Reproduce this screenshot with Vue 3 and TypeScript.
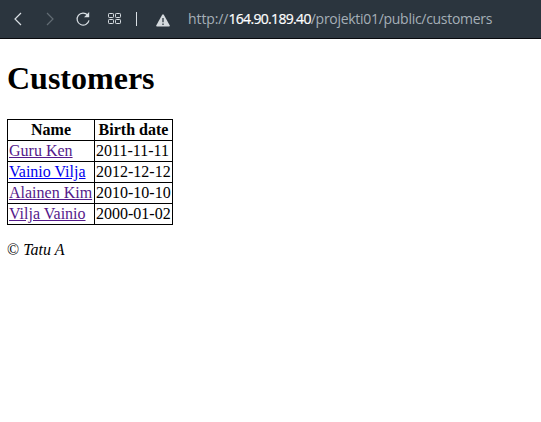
<script setup lang="ts">
interface Customer {
  name: string
  birthDate: string
  visited: boolean
}

const customers: Customer[] = [
  { name: 'Guru Ken', birthDate: '2011-11-11', visited: true },
  { name: 'Vainio Vilja', birthDate: '2012-12-12', visited: false },
  { name: 'Alainen Kim', birthDate: '2010-10-10', visited: true },
  { name: 'Vilja Vainio', birthDate: '2000-01-02', visited: true },
]
</script>

<template>
  <div class="window">
    <header class="toolbar">
      <svg class="icon back" width="16" height="16" viewBox="0 0 16 16"><path d="M11 2 5 8l6 6" /></svg>
      <svg class="icon forward" width="16" height="16" viewBox="0 0 16 16"><path d="M5 2l6 6-6 6" /></svg>
      <svg class="icon reload" width="16" height="16" viewBox="0 0 16 16">
        <path d="M12.7 4.2A6 6 0 1 0 14 9.3" />
        <path class="solid" d="M14.2 1v5.2H9z" />
      </svg>
      <svg class="icon tiles" width="14" height="12" viewBox="0 0 14 12">
        <rect x=".5" y=".5" width="5" height="4" rx=".8" />
        <rect x="7.5" y=".5" width="5" height="4" rx=".8" />
        <rect x=".5" y="6.5" width="5" height="4" rx=".8" />
        <rect x="7.5" y="6.5" width="5" height="4" rx=".8" />
      </svg>
      <span class="divider"></span>
      <svg class="warning" width="14" height="13" viewBox="0 0 14 13">
        <path d="M6.2.8Q7-.3 7.8.8L13.8 11.5Q14 12.5 13 12.5H1Q0 12.5.2 11.5z" fill="#d5dade" />
        <path d="M6.2 4h1.6v4.3H6.2zM6.2 9.4h1.6V11H6.2z" fill="#4b555d" />
      </svg>
      <div class="url"><span class="scheme">http://</span><span class="host">164.90.189.40</span><span class="path">/projekti01/public/customers</span></div>
    </header>
    <main>
      <h1>Customers</h1>
      <table>
        <thead>
          <tr><th class="name">Name</th><th class="date">Birth date</th></tr>
        </thead>
        <tbody>
          <tr v-for="customer in customers" :key="customer.name">
            <td><a href="#" :class="{ visited: customer.visited }">{{ customer.name }}</a></td>
            <td>{{ customer.birthDate }}</td>
          </tr>
        </tbody>
      </table>
      <footer>© <em>Tatu A</em></footer>
    </main>
  </div>
</template>

<style>
body {
  margin: 0;
  background: #fff;
}
</style>

<style scoped>
.window {
  height: 422px;
  overflow: hidden;
  background: #fff;
}
.toolbar {
  box-sizing: border-box;
  height: 39px;
  display: flex;
  align-items: center;
  padding-left: 10px;
  background: #2b353e;
  border-bottom: 1px solid #08090d;
}
.icon {
  fill: none;
  stroke: #d9dfe4;
  stroke-width: 1.2;
  flex: none;
}
.forward {
  margin-left: 16px;
  stroke: #626c74;
}
.reload {
  margin-left: 17px;
}
.solid {
  fill: #d9dfe4;
  stroke: none;
}
.tiles {
  margin-left: 17px;
  stroke-width: 1;
}
.divider {
  width: 1px;
  height: 14px;
  margin-left: 14px;
  background: #d9dfe4;
}
.warning {
  margin: 2px 0 0 19px;
  flex: none;
}
.url {
  display: flex;
  margin-left: 18px;
  font: 14px/20px "Open Sans", "Noto Sans", sans-serif;
  color: #a5afb7;
  white-space: nowrap;
}
.scheme {
  letter-spacing: -0.1px;
}
.host {
  color: #fff;
  letter-spacing: -0.67px;
  -webkit-text-stroke: 0.2px #fff;
}
.path {
  letter-spacing: -0.29px;
}
main {
  padding: 20px 7px 0;
  font: 16px/19px "Liberation Serif", serif;
  color: #000;
}
h1 {
  margin: 0 0 22px;
  font-size: 32px;
  line-height: 38px;
}
table {
  width: 166px;
  table-layout: fixed;
  border-collapse: collapse;
}
th,
td {
  box-sizing: border-box;
  height: 21px;
  padding: 1px;
  border: 1px solid #000;
  line-height: 18px;
  white-space: nowrap;
}
.name {
  width: 87px;
}
.date {
  width: 78px;
}
a {
  color: #0000ee;
  text-decoration: underline;
}
a.visited {
  color: #551a8b;
}
footer {
  margin-top: 15px;
}
</style>
